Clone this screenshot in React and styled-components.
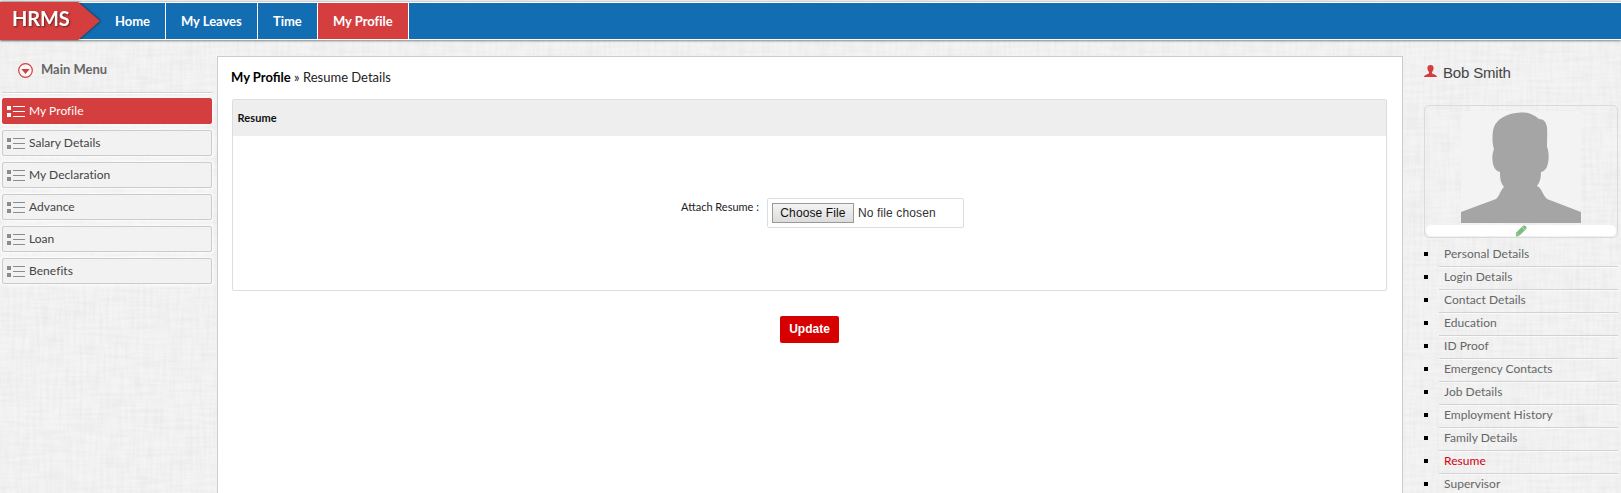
import React from "react";
import styled, { createGlobalStyle, css } from "styled-components";

const linen = `url("data:image/svg+xml,${encodeURIComponent(
  `<svg xmlns="http://www.w3.org/2000/svg" width="400" height="400"><filter id="h" x="0" y="0" width="100%" height="100%"><feTurbulence type="fractalNoise" baseFrequency="0.03 0.3" numOctaves="2" seed="4" stitchTiles="stitch"/><feColorMatrix values="0 0 0 0 0 0 0 0 0 0 0 0 0 0 0 0.05 0 0 0 -0.018"/></filter><filter id="v" x="0" y="0" width="100%" height="100%"><feTurbulence type="fractalNoise" baseFrequency="0.3 0.03" numOctaves="2" seed="9" stitchTiles="stitch"/><feColorMatrix values="0 0 0 0 0 0 0 0 0 0 0 0 0 0 0 0.05 0 0 0 -0.018"/></filter><rect width="400" height="400" fill="#f4f4f4"/><rect width="400" height="400" filter="url(#h)"/><rect width="400" height="400" filter="url(#v)"/></svg>`
)}")`;

const GlobalStyle = createGlobalStyle`
  * { box-sizing: border-box; }
  body {
    margin: 0;
    overflow: hidden;
    background: #f2f2f2 ${linen};
    font-family: Lato, "Liberation Sans", sans-serif;
    color: #444;
  }
`;

const Page = styled.div`
  height: 493px;
  display: flex;
  flex-direction: column;
  overflow: hidden;
`;

const Header = styled.header`
  display: flex;
  flex: none;
  height: 39px;
  margin: 1px 0 1px;
  border-top: 1px solid #cfcfcf;
  border-bottom: 1px solid #fff;
  background: linear-gradient(#fff 1px, #136db2 1px);
  box-shadow: 0 1px 2px rgba(0, 0, 0, 0.45);
`;

const Logo = styled.div`
  position: relative;
  width: 100px;
  height: 38px;
  padding-left: 12px;
  font-size: 20px;
  font-weight: 700;
  line-height: 33px;
  letter-spacing: -0.15px;
  color: #fff;
  text-shadow: 1px 1px 2px rgba(0, 0, 0, 0.5);
  filter: drop-shadow(1px 0 1px rgba(0, 0, 0, 0.45));
  &::before {
    content: "";
    position: absolute;
    inset: 0;
    z-index: -1;
    background: #d43e3e;
    clip-path: polygon(0 0, 78px 0, 100% 50%, 78px 100%, 0 100%);
  }
`;

const NavItem = styled.a`
  width: ${(p) => p.$w}px;
  height: 36px;
  margin-top: 1px;
  padding-left: 15px;
  border-right: 1px solid #fff;
  background: ${(p) => (p.$active ? "#d43e3e" : "transparent")};
  color: #fff;
  font-size: 13px;
  font-weight: 700;
  line-height: 37px;
  letter-spacing: -0.03px;
  white-space: nowrap;
`;

const Body = styled.div`
  display: flex;
  flex: 1;
  min-height: 0;
  padding-top: 1px;
`;

const Sidebar = styled.aside`
  width: 217px;
  padding: 14px 5px 0 2px;
`;

const MenuTitle = styled.h2`
  display: flex;
  align-items: center;
  height: 37px;
  margin: 0 0 5px;
  padding: 0 0 10px 16px;
  gap: 8px;
  border-bottom: 1px solid #d2d2d2;
  box-shadow: 0 1px 0 #fff;
  color: #666;
  font-size: 13px;
  font-weight: 700;
  svg { margin-top: 3px; }
`;

const MenuItem = styled.a`
  display: flex;
  align-items: center;
  gap: 4px;
  height: 26px;
  margin-bottom: 6px;
  padding: 0 0 2px 4px;
  border: 1px solid #ccc;
  border-radius: 2px;
  background: #f2f2f2;
  box-shadow: 0 0 3px 2px rgba(255, 255, 255, 0.6);
  color: #444;
  font-size: 12px;
  letter-spacing: 0.04px;
  svg { color: #8c8c8c; margin-top: 3px; }
  ${(p) => p.$active && css`
    border-color: #d43e3e;
    background: #d43e3e;
    color: #fff;
    svg { color: #fff; }
  `}
`;

const Main = styled.main`
  width: 1186px;
  margin-top: 14px;
  padding: 0 15px 0 14px;
  border: 1px solid #ccc;
  border-bottom: 0;
  background: #fff;
`;

const Breadcrumb = styled.div`
  height: 42px;
  margin-left: -1px;
  color: #222;
  font-size: 13px;
  line-height: 40px;
  b { color: #000; font-weight: 700; }
`;

const Card = styled.section`
  height: 192px;
  border: 1px solid #ddd;
  border-radius: 2px;
`;

const CardTitle = styled.h3`
  height: 36px;
  margin: 0;
  padding-left: 4.5px;
  background: #eee;
  color: #111;
  font-size: 11px;
  font-weight: 700;
  line-height: 35px;
  letter-spacing: 0.1px;
`;

const Field = styled.div`
  display: flex;
  margin-top: 62px;
`;

const Label = styled.label`
  width: 534px;
  padding-right: 8px;
  color: #222;
  font-size: 11px;
  line-height: 17px;
  text-align: right;
`;

const FileInput = styled.div`
  display: flex;
  align-items: center;
  gap: 4px;
  width: 197px;
  height: 30px;
  padding-left: 4px;
  border: 1px solid #d9dfe8;
  border-radius: 2px;
  color: #333;
  font: 12px "Liberation Sans", sans-serif;
  letter-spacing: 0.12px;
`;

const ChooseButton = styled.button`
  width: 82px;
  height: 20px;
  padding: 0;
  border: 1px solid #999;
  background: linear-gradient(#f4f4f4, #dcdcdc);
  color: #111;
  font: 12px "Liberation Sans", sans-serif;
  letter-spacing: 0.12px;
`;

const UpdateButton = styled.button`
  display: block;
  width: 59px;
  height: 27px;
  margin: 25px auto 0;
  padding: 0 0 2px;
  border: 0;
  border-radius: 2px;
  background: #d60000;
  color: #fff;
  font: 700 12px "Liberation Sans", sans-serif;
`;

const Profile = styled.aside`
  width: 218px;
  padding: 21px 3px 0 21px;
`;

const UserName = styled.div`
  display: flex;
  align-items: center;
  gap: 6px;
  height: 18px;
  color: #444;
  font: 15px "Liberation Sans", sans-serif;
  letter-spacing: -0.17px;
  svg { margin-bottom: 2px; }
`;

const PhotoBox = styled.div`
  display: flex;
  flex-direction: column;
  align-items: center;
  height: 133px;
  margin-top: 24px;
  padding-top: 5px;
  border: 1px solid #dadada;
  border-radius: 5px;
  > svg { flex: none; }
`;

const EditBar = styled.div`
  display: flex;
  justify-content: center;
  align-items: center;
  flex: none;
  width: 190px;
  height: 11px;
  margin-top: 2px;
  border-radius: 6px;
  background: #fff;
  svg { flex: none; }
`;

const Links = styled.ul`
  margin: 6px 0 0;
  padding: 0;
  list-style: none;
`;

const LinkRow = styled.li`
  display: flex;
  align-items: center;
  height: 23px;
  &::before {
    content: "";
    flex: none;
    width: 4px;
    height: 4px;
    margin: 0 11px 3px 0;
    background: #000;
  }
`;

const LinkText = styled.a`
  flex: 1;
  height: 23px;
  padding-left: 5px;
  border-bottom: 1px solid #d2d2d2;
  box-shadow: 0 1px 0 #fafafa;
  color: ${(p) => (p.$active ? "#d60014" : "#666")};
  font-size: 12px;
  line-height: 20px;
  letter-spacing: 0.04px;
`;

const ListIcon = () => (
  <svg width="18" height="12" viewBox="0 0 18 12" fill="currentColor" shapeRendering="crispEdges">
    <path d="M0 0h4v4H0zM0 7h4v4H0zM6 0h12v1H6zM6 5h12v1H6zM6 10h12v1H6z" />
  </svg>
);

const CircleArrow = () => (
  <svg width="15" height="15" viewBox="0 0 15 15">
    <circle cx="7.5" cy="7.5" r="6.8" fill="#f8f8f8" stroke="#d43e3e" strokeWidth="1.2" />
    <path d="M3.3 6h8.400l-4.200 5z" fill="#d43e3e" />
  </svg>
);

const UserIcon = () => (
  <svg width="13" height="13" viewBox="0 0 13 13" fill="#d43e3e">
    <path d="M6.5 0C4.300 0 3.400 1 3.500 2.900c-.3.2-.2 1.200.2 1.600.2 1.100.7 1.900 1.300 2.400v1.300C4.500 9.200.3 9.200 0 12h13c-.3-2.800-4.500-2.800-5-3.800V6.900c.6-.5 1.100-1.300 1.300-2.400.4-.4.5-1.400.2-1.600C9.600 1 8.700 0 6.500 0z" />
  </svg>
);

const Silhouette = () => (
  <svg width="120" height="112" viewBox="0 0 120 112">
    <path fill="#f3f3f3" d="M0 0h120v112H0z" />
    <path fill="#a5a5a5" d="M0 112v-11l35-13c3-2 4-8 8-12-3-4-4-7-4-15-4-1-6-4-7-8-1-5-1-10 1-15-2-5-2-17 0-22C36 8 46 2 60 1.500c8-.2 12 2 18 6.500 5 0 7 3 8 8 .5 8 0 14 0 20 2 4 2 12 1 16-1 5-3 8-7 9 0 6-1 10-4 14 5 2 5 8 10 13l34 13v11z" />
  </svg>
);

const Pencil = () => (
  <svg width="12" height="12" viewBox="0 0 12 12">
    <path d="M.8 8 7.200 1.600Q8.600.2 10 .5l1.500 1.500q.3 1.200-.8 2.400L4.300 10.800 1 11.500z" fill="#7fbc7f" />
    <path d="m7 2 3 3M2 8.500l1.800 1.800" stroke="#d7ebd7" strokeWidth=".7" />
  </svg>
);

const nav = [["Home", 66], ["My Leaves", 92], ["Time", 60], ["My Profile", 91]];
const menu = ["My Profile", "Salary Details", "My Declaration", "Advance", "Loan", "Benefits"];
const links = [
  "Personal Details", "Login Details", "Contact Details", "Education", "ID Proof",
  "Emergency Contacts", "Job Details", "Employment History", "Family Details", "Resume", "Supervisor",
];

export default function App() {
  return (
    <Page>
      <GlobalStyle />
      <Header>
        <Logo>HRMS</Logo>
        {nav.map(([name, w]) => (
          <NavItem key={name} $w={w} $active={name === "My Profile"}>{name}</NavItem>
        ))}
      </Header>
      <Body>
        <Sidebar>
          <MenuTitle><CircleArrow />Main Menu</MenuTitle>
          {menu.map((name, i) => (
            <MenuItem key={name} $active={i === 0}><ListIcon />{name}</MenuItem>
          ))}
        </Sidebar>
        <Main>
          <Breadcrumb><b>My Profile</b> » Resume Details</Breadcrumb>
          <Card>
            <CardTitle>Resume</CardTitle>
            <Field>
              <Label>Attach Resume :</Label>
              <FileInput><ChooseButton>Choose File</ChooseButton>No file chosen</FileInput>
            </Field>
          </Card>
          <UpdateButton>Update</UpdateButton>
        </Main>
        <Profile>
          <UserName><UserIcon />Bob Smith</UserName>
          <PhotoBox>
            <Silhouette />
            <EditBar><Pencil /></EditBar>
          </PhotoBox>
          <Links>
            {links.map((name) => (
              <LinkRow key={name}><LinkText $active={name === "Resume"}>{name}</LinkText></LinkRow>
            ))}
          </Links>
        </Profile>
      </Body>
    </Page>
  );
}
